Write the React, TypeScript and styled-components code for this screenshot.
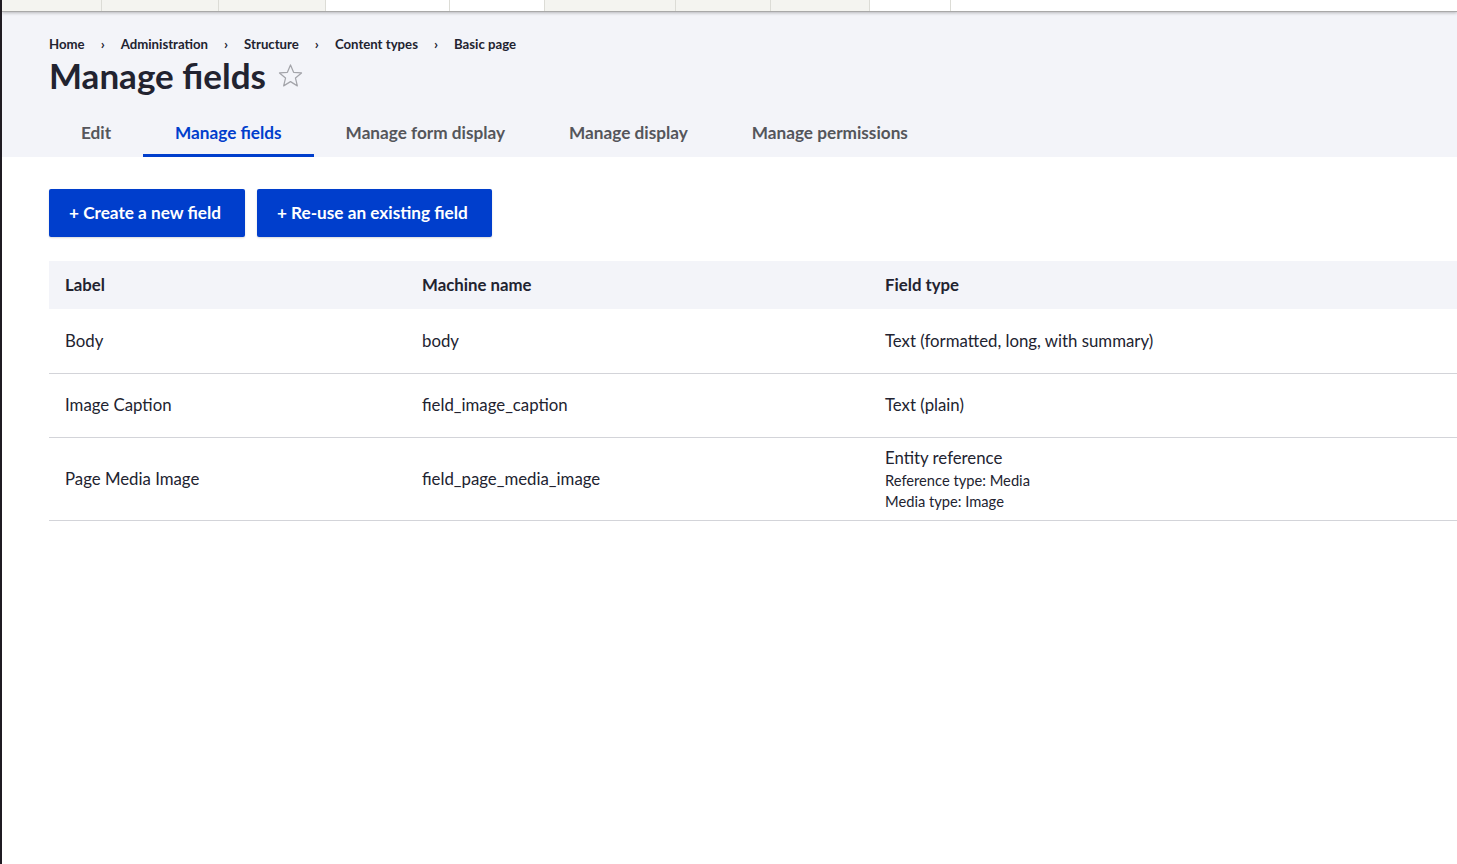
import React from "react";
import styled, { createGlobalStyle } from "styled-components";

const FONT = `Lato, "Noto Sans", "Liberation Sans", sans-serif`;
const BLUE = "#003ecc";
const TEXT = "#222330";
const HEAD_BG = "#f3f4f9";
const BORDER = "#d3d4d9";

const GlobalStyle = createGlobalStyle`
  html, body {
    margin: 0;
    padding: 0;
    background: #fff;
  }
  body {
    font-family: ${FONT};
    color: ${TEXT};
    overflow: hidden;
  }
`;

type Segment = { width: number; light?: boolean };

const toolbarSegments: Segment[] = [
  { width: 100 },
  { width: 117 },
  { width: 107 },
  { width: 124, light: true },
  { width: 95, light: true },
  { width: 131 },
  { width: 95 },
  { width: 99 },
  { width: 81, light: true },
];

const fields = [
  { label: "Body", machine: "body", type: "Text (formatted, long, with summary)" },
  { label: "Image Caption", machine: "field_image_caption", type: "Text (plain)" },
  {
    label: "Page Media Image",
    machine: "field_page_media_image",
    type: "Entity reference",
    details: ["Reference type: Media", "Media type: Image"],
  },
];

const tabs = ["Edit", "Manage fields", "Manage form display", "Manage display", "Manage permissions"];
const crumbs = ["Home", "Administration", "Structure", "Content types", "Basic page"];

const App = function App() {
  return (
    <Page>
      <GlobalStyle />
      <Toolbar>
        {toolbarSegments.map((s, i) => (
          <ToolbarItem key={i} $width={s.width} $light={s.light} />
        ))}
        <ToolbarFill />
      </Toolbar>
      <Header>
        <Breadcrumb>
          {crumbs.map((c, i) => (
            <React.Fragment key={c}>
              {i > 0 && <Chevron>›</Chevron>}
              <Crumb>{c}</Crumb>
            </React.Fragment>
          ))}
        </Breadcrumb>
        <TitleRow>
          <Title>Manage fields</Title>
          <Star viewBox="0 0 24 24" aria-hidden>
            <path
              d="M12 2.6l2.75 6.55 7.05.55-5.38 4.6 1.67 6.9L12 17.45 5.91 21.2l1.67-6.9L2.2 9.7l7.05-.55z"
              fill="none"
              stroke="currentColor"
              strokeWidth="1.1"
              strokeLinejoin="round"
            />
          </Star>
        </TitleRow>
        <Tabs>
          {tabs.map((t) => (
            <Tab key={t} $active={t === "Manage fields"}>
              {t}
            </Tab>
          ))}
        </Tabs>
      </Header>
      <Main>
        <Actions>
          <Button>+ Create a new field</Button>
          <Button>+ Re-use an existing field</Button>
        </Actions>
        <Table>
          <colgroup>
            <col style={{ width: 357 }} />
            <col style={{ width: 463 }} />
            <col />
          </colgroup>
          <thead>
            <tr>
              <Th>Label</Th>
              <Th>Machine name</Th>
              <Th>Field type</Th>
            </tr>
          </thead>
          <tbody>
            {fields.map((f) => (
              <Row key={f.machine}>
                <Td>{f.label}</Td>
                <Td>{f.machine}</Td>
                <Td>
                  {f.type}
                  {f.details &&
                    f.details.map((d) => <Detail key={d}>{d}</Detail>)}
                </Td>
              </Row>
            ))}
          </tbody>
        </Table>
      </Main>
    </Page>
  );
};
export default App;

const Page = styled.div`
  min-height: 864px;
  border-left: 2px solid #1f1b22;
  box-sizing: border-box;
  width: 1457px;
  overflow: hidden;
`;

const Toolbar = styled.div`
  display: flex;
  height: 11px;
  background: #f4f4f0;
  border-bottom: 1px solid #a9a9a9;
  box-shadow: 0 1px 3px rgba(0, 0, 0, 0.25);
  position: relative;
  z-index: 1;
`;

const ToolbarItem = styled.div<{ $width: number; $light?: boolean }>`
  width: ${(p) => p.$width}px;
  flex: none;
  box-sizing: border-box;
  border-right: 1px solid #dcdcd6;
  background: ${(p) => (p.$light ? "#ffffff" : "#f4f4f0")};
`;

const ToolbarFill = styled.div`
  flex: 1;
  background: #fff;
`;

const Header = styled.div`
  background: ${HEAD_BG};
  padding: 24px 0 0 47px;
`;

const Breadcrumb = styled.nav`
  display: flex;
  align-items: center;
  font-size: 13.2px;
  font-weight: 700;
  line-height: 16px;
  height: 16px;
`;

const Crumb = styled.span`
  color: ${TEXT};
`;

const Chevron = styled.span`
  margin: 0 16px 0 16px;
  font-size: 14px;
  color: ${TEXT};
`;

const TitleRow = styled.div`
  display: flex;
  align-items: center;
  margin-top: 3px;
  height: 40px;
`;

const Title = styled.h1`
  margin: 0;
  font-size: 35px;
  line-height: 40px;
  font-weight: 700;
  color: ${TEXT};
`;

const Star = styled.svg`
  width: 27px;
  height: 27px;
  margin-left: 11px;
  margin-top: 1px;
  color: #a4a5ab;
`;

const Tabs = styled.div`
  display: flex;
  margin-top: 14px;
`;

const Tab = styled.div<{ $active?: boolean }>`
  height: 48px;
  box-sizing: border-box;
  padding: 2px 32px 0;
  display: flex;
  align-items: center;
  font-size: 17.2px;
  font-weight: 700;
  color: ${(p) => (p.$active ? BLUE : "#55565b")};
  border-bottom: 3px solid ${(p) => (p.$active ? BLUE : "transparent")};
`;

const Main = styled.div`
  padding: 32px 0 0 47px;
`;

const Actions = styled.div`
  display: flex;
  gap: 12px;
`;

const Button = styled.button`
  height: 48px;
  padding: 0 24px 0 20px;
  border: none;
  border-radius: 2px;
  background: ${BLUE};
  color: #fff;
  font-family: ${FONT};
  font-size: 17.2px;
  font-weight: 700;
  line-height: 46px;
  box-shadow: 0 1px 2px rgba(0, 0, 0, 0.15);
  cursor: pointer;
`;

const Table = styled.table`
  margin-top: 24px;
  width: 1420px;
  border-collapse: collapse;
  table-layout: fixed;
  font-size: 16.8px;
`;

const Th = styled.th`
  height: 48px;
  padding: 6px 16px 8px;
  box-sizing: border-box;
  background: ${HEAD_BG};
  text-align: left;
  font-weight: 700;
  color: ${TEXT};
`;

const Row = styled.tr`
  border-bottom: 1px solid ${BORDER};
`;

const Td = styled.td`
  height: 64px;
  padding: 8px 16px;
  box-sizing: border-box;
  line-height: 24px;
  vertical-align: middle;
  color: ${TEXT};
`;

const Detail = styled.div`
  font-size: 14.7px;
  line-height: 21px;
`;
